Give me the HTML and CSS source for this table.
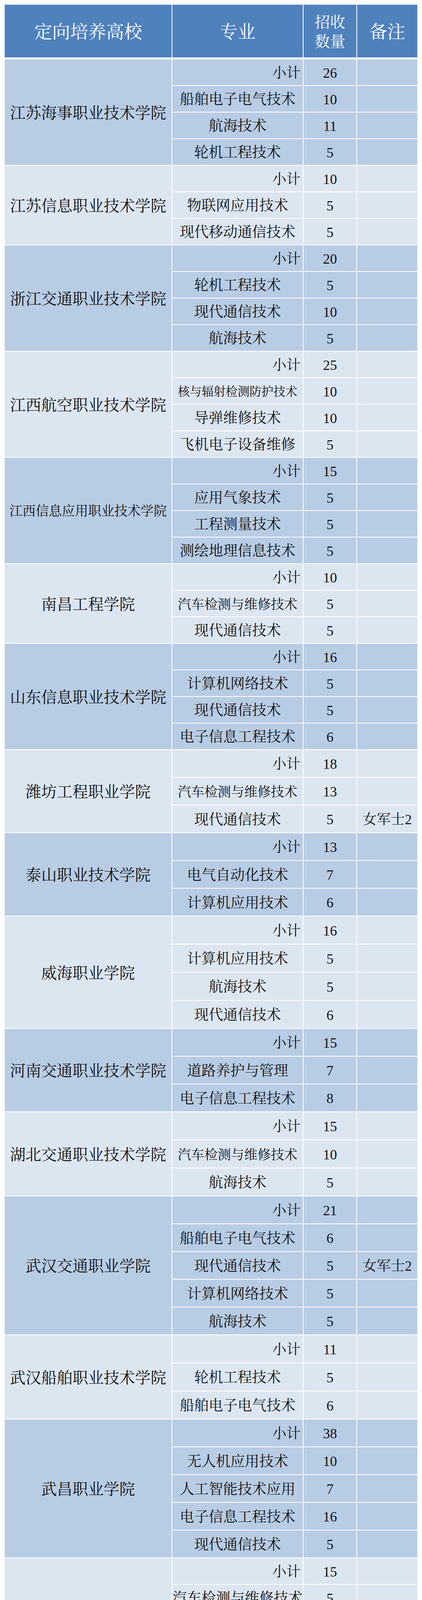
FILE: index.html
```html
<!DOCTYPE html>
<html lang="zh-CN">
<head>
<meta charset="utf-8">
<title>定向培养高校招收计划</title>
<link rel="stylesheet" href="styles.css">
</head>
<body>
<table class="plan">
  <colgroup>
    <col class="c-school"><col class="c-major"><col class="c-num"><col class="c-note">
  </colgroup>
  <thead>
    <tr><th>定向培养高校</th><th>专业</th><th class="h-num">招收<br>数量</th><th>备注</th></tr>
  </thead>

  <tbody class="dark r68">
    <tr><td class="school" rowspan="4">江苏海事职业技术学院</td><td class="sub">小计</td><td class="num">26</td><td></td></tr>
    <tr><td class="major">船舶电子电气技术</td><td class="num">10</td><td></td></tr>
    <tr><td class="major">航海技术</td><td class="num">11</td><td></td></tr>
    <tr><td class="major">轮机工程技术</td><td class="num">5</td><td></td></tr>
  </tbody>

  <tbody class="light r68">
    <tr><td class="school" rowspan="3">江苏信息职业技术学院</td><td class="sub">小计</td><td class="num">10</td><td></td></tr>
    <tr><td class="major">物联网应用技术</td><td class="num">5</td><td></td></tr>
    <tr><td class="major">现代移动通信技术</td><td class="num">5</td><td></td></tr>
  </tbody>

  <tbody class="dark r68">
    <tr><td class="school" rowspan="4">浙江交通职业技术学院</td><td class="sub">小计</td><td class="num">20</td><td></td></tr>
    <tr><td class="major">轮机工程技术</td><td class="num">5</td><td></td></tr>
    <tr><td class="major">现代通信技术</td><td class="num">10</td><td></td></tr>
    <tr><td class="major">航海技术</td><td class="num">5</td><td></td></tr>
  </tbody>

  <tbody class="light r68">
    <tr><td class="school" rowspan="4">江西航空职业技术学院</td><td class="sub">小计</td><td class="num">25</td><td></td></tr>
    <tr><td class="major m10">核与辐射检测防护技术</td><td class="num">10</td><td></td></tr>
    <tr><td class="major">导弹维修技术</td><td class="num">10</td><td></td></tr>
    <tr><td class="major">飞机电子设备维修</td><td class="num">5</td><td></td></tr>
  </tbody>

  <tbody class="dark r68">
    <tr><td class="school long" rowspan="4">江西信息应用职业技术学院</td><td class="sub">小计</td><td class="num">15</td><td></td></tr>
    <tr><td class="major">应用气象技术</td><td class="num">5</td><td></td></tr>
    <tr><td class="major">工程测量技术</td><td class="num">5</td><td></td></tr>
    <tr><td class="major">测绘地理信息技术</td><td class="num">5</td><td></td></tr>
  </tbody>

  <tbody class="light r68">
    <tr><td class="school" rowspan="3">南昌工程学院</td><td class="sub">小计</td><td class="num">10</td><td></td></tr>
    <tr><td class="major m9">汽车检测与维修技术</td><td class="num">5</td><td></td></tr>
    <tr><td class="major">现代通信技术</td><td class="num">5</td><td></td></tr>
  </tbody>

  <tbody class="dark r68">
    <tr><td class="school" rowspan="4">山东信息职业技术学院</td><td class="sub">小计</td><td class="num">16</td><td></td></tr>
    <tr><td class="major">计算机网络技术</td><td class="num">5</td><td></td></tr>
    <tr><td class="major">现代通信技术</td><td class="num">5</td><td></td></tr>
    <tr><td class="major">电子信息工程技术</td><td class="num">6</td><td></td></tr>
  </tbody>

  <tbody class="light r71">
    <tr><td class="school" rowspan="3">潍坊工程职业学院</td><td class="sub">小计</td><td class="num">18</td><td></td></tr>
    <tr><td class="major m9">汽车检测与维修技术</td><td class="num">13</td><td></td></tr>
    <tr><td class="major">现代通信技术</td><td class="num">5</td><td class="note">女军士2</td></tr>
  </tbody>

  <tbody class="dark r71">
    <tr><td class="school" rowspan="3">泰山职业技术学院</td><td class="sub">小计</td><td class="num">13</td><td></td></tr>
    <tr><td class="major">电气自动化技术</td><td class="num">7</td><td></td></tr>
    <tr><td class="major">计算机应用技术</td><td class="num">6</td><td></td></tr>
  </tbody>

  <tbody class="light r72">
    <tr><td class="school" rowspan="4">威海职业学院</td><td class="sub">小计</td><td class="num">16</td><td></td></tr>
    <tr><td class="major">计算机应用技术</td><td class="num">5</td><td></td></tr>
    <tr><td class="major">航海技术</td><td class="num">5</td><td></td></tr>
    <tr><td class="major">现代通信技术</td><td class="num">6</td><td></td></tr>
  </tbody>

  <tbody class="dark r71">
    <tr><td class="school" rowspan="3">河南交通职业技术学院</td><td class="sub">小计</td><td class="num">15</td><td></td></tr>
    <tr><td class="major">道路养护与管理</td><td class="num">7</td><td></td></tr>
    <tr><td class="major">电子信息工程技术</td><td class="num">8</td><td></td></tr>
  </tbody>

  <tbody class="light r72">
    <tr><td class="school" rowspan="3">湖北交通职业技术学院</td><td class="sub">小计</td><td class="num">15</td><td></td></tr>
    <tr><td class="major m9">汽车检测与维修技术</td><td class="num">10</td><td></td></tr>
    <tr><td class="major">航海技术</td><td class="num">5</td><td></td></tr>
  </tbody>

  <tbody class="dark r71">
    <tr><td class="school" rowspan="5">武汉交通职业学院</td><td class="sub">小计</td><td class="num">21</td><td></td></tr>
    <tr><td class="major">船舶电子电气技术</td><td class="num">6</td><td></td></tr>
    <tr><td class="major">现代通信技术</td><td class="num">5</td><td class="note">女军士2</td></tr>
    <tr><td class="major">计算机网络技术</td><td class="num">5</td><td></td></tr>
    <tr><td class="major">航海技术</td><td class="num">5</td><td></td></tr>
  </tbody>

  <tbody class="light r72">
    <tr><td class="school" rowspan="3">武汉船舶职业技术学院</td><td class="sub">小计</td><td class="num">11</td><td></td></tr>
    <tr><td class="major">轮机工程技术</td><td class="num">5</td><td></td></tr>
    <tr><td class="major">船舶电子电气技术</td><td class="num">6</td><td></td></tr>
  </tbody>

  <tbody class="dark r71">
    <tr><td class="school" rowspan="5">武昌职业学院</td><td class="sub">小计</td><td class="num">38</td><td></td></tr>
    <tr><td class="major">无人机应用技术</td><td class="num">10</td><td></td></tr>
    <tr><td class="major">人工智能技术应用</td><td class="num">7</td><td></td></tr>
    <tr><td class="major">电子信息工程技术</td><td class="num">16</td><td></td></tr>
    <tr><td class="major">现代通信技术</td><td class="num">5</td><td></td></tr>
  </tbody>

  <tbody class="light r68">
    <tr><td class="school" rowspan="4">湖南汽车工程职业学院</td><td class="sub">小计</td><td class="num">15</td><td></td></tr>
    <tr><td class="major">汽车检测与维修技术</td><td class="num">5</td><td></td></tr>
    <tr><td class="major">机械制造及自动化</td><td class="num">5</td><td></td></tr>
    <tr><td class="major">计算机网络技术</td><td class="num">5</td><td></td></tr>
  </tbody>

  <tbody class="dark r68">
    <tr><td class="school long" rowspan="4">湖南国防工业职业技术学院</td><td class="sub">小计</td><td class="num">15</td><td></td></tr>
    <tr><td class="major">机械设计与制造</td><td class="num">5</td><td></td></tr>
    <tr><td class="major m9">汽车制造与试验技术</td><td class="num">5</td><td></td></tr>
    <tr><td class="major">应用电子技术</td><td class="num">5</td><td></td></tr>
  </tbody>

  <tbody class="light r68">
    <tr><td class="school" rowspan="3">湖南体育职业学院</td><td class="sub">小计</td><td class="num">13</td><td></td></tr>
    <tr><td class="major m9">民族传统体育(散打)</td><td class="num">5</td><td></td></tr>
    <tr><td class="major">运动训练</td><td class="num">8</td><td></td></tr>
  </tbody>

  <tbody class="dark r68">
    <tr><td class="school" rowspan="5">长沙航空职业技术学院</td><td class="sub">小计</td><td class="num">35</td><td></td></tr>
    <tr><td class="major">飞行器维修技术</td><td class="num">10</td><td></td></tr>
    <tr><td class="major">通用航空器维修</td><td class="num">5</td><td></td></tr>
    <tr><td class="major">无人机应用技术</td><td class="num">5</td><td></td></tr>
    <tr><td class="major">导弹维修技术</td><td class="num">15</td><td></td></tr>
  </tbody>

  <tbody class="light r68">
    <tr><td class="school two" rowspan="4">张家界航空工业<br>职业技术学院</td><td class="sub">小计</td><td class="num">19</td><td></td></tr>
    <tr><td class="major">无人机应用技术</td><td class="num">5</td><td></td></tr>
    <tr><td class="major">电气自动化技术</td><td class="num">9</td><td></td></tr>
    <tr><td class="major">飞机电子设备维修</td><td class="num">5</td><td></td></tr>
  </tbody>

  <tbody class="dark r68">
    <tr><td class="school" rowspan="3">重庆医药高等专科学校</td><td class="sub">小计</td><td class="num">15</td><td></td></tr>
    <tr><td class="major">康复治疗技术</td><td class="num">5</td><td></td></tr>
    <tr><td class="major">临床医学</td><td class="num">10</td><td></td></tr>
  </tbody>

  <tbody class="light r68">
    <tr><td class="school" rowspan="3">重庆机电职业技术大学</td><td class="sub">小计</td><td class="num">13</td><td></td></tr>
    <tr><td class="major">机电一体化技术</td><td class="num">8</td><td></td></tr>
    <tr><td class="major">大数据技术</td><td class="num">5</td><td></td></tr>
  </tbody>

  <tbody class="dark r74">
    <tr><td class="school" rowspan="3">重庆航天职业技术学院</td><td class="sub">小计</td><td class="num">20</td><td></td></tr>
    <tr><td class="major">应用电子技术</td><td class="num">10</td><td></td></tr>
    <tr><td class="major">现代通信技术</td><td class="num">10</td><td></td></tr>
  </tbody>

  <tbody class="light r71">
    <tr><td class="school" rowspan="3">重庆交通职业学院</td><td class="sub">小计</td><td class="num">12</td><td></td></tr>
    <tr><td class="major">工程测量技术</td><td class="num">7</td><td></td></tr>
    <tr><td class="major m9">汽车制造与试验技术</td><td class="num">5</td><td></td></tr>
  </tbody>

  <tbody class="dark r71">
    <tr><td class="school" rowspan="3">四川邮电职业技术学院</td><td class="sub">小计</td><td class="num">11</td><td></td></tr>
    <tr><td class="major">现代移动通信技术</td><td class="num">5</td><td></td></tr>
    <tr><td class="major">现代通信技术</td><td class="num">6</td><td></td></tr>
  </tbody>

  <tbody class="light r72">
    <tr><td class="school" rowspan="4">成都航空职业技术学院</td><td class="sub">小计</td><td class="num">25</td><td></td></tr>
    <tr><td class="major">飞机电子设备维修</td><td class="num">10</td><td></td></tr>
    <tr><td class="major">飞机机电设备维修</td><td class="num">5</td><td></td></tr>
    <tr><td class="major">无人机应用技术</td><td class="num">10</td><td></td></tr>
  </tbody>

  <tbody class="dark r71">
    <tr><td class="school" rowspan="3">延安职业技术学院</td><td class="sub">小计</td><td class="num">14</td><td></td></tr>
    <tr><td class="major">轮机工程技术</td><td class="num">5</td><td></td></tr>
    <tr><td class="major m9">汽车制造与试验技术</td><td class="num">9</td><td></td></tr>
  </tbody>

  <tbody class="light r71">
    <tr><td class="school long" rowspan="3">兰州资源环境职业技术大学</td><td class="sub">小计</td><td class="num">21</td><td></td></tr>
    <tr><td class="major">应用气象技术</td><td class="num">16</td><td></td></tr>
    <tr><td class="major m10">电力系统继电保护技术</td><td class="num">5</td><td></td></tr>
  </tbody>
</table>
</body>
</html>
```

FILE: styles.css
```css
html, body {
  margin: 0;
  padding: 0;
  background: #ffffff;
}

body {
  font-family: "Liberation Serif", "Noto Serif CJK SC", "Noto Sans CJK SC", serif;
  color: #111111;
}

.plan {
  border-collapse: separate;
  border-spacing: 2px;
  table-layout: fixed;
  width: 1060px;
  margin: 10px 0 0 10px;
}

.c-school { width: 427px; }
.c-major  { width: 334px; }
.c-num    { width: 135px; }
.c-note   { width: 154px; }

th, td {
  padding: 0;
  text-align: center;
  vertical-align: middle;
  white-space: nowrap;
}

/* header */
thead tr { height: 138px; }

thead th {
  background: #4f81bd;
  color: #ffffff;
  font-weight: normal;
  font-size: 46px;
  line-height: 50px;
  padding-top: 5px;
  border-bottom: 3px solid #ffffff;
}

thead th.h-num {
  font-size: 39px;
}

/* body groups */
.dark td  { background: #b8cce4; }
.light td { background: #dce6f1; }

.r68 tr { height: 66px; }
.r71 tr { height: 69px; }
.r72 tr { height: 70px; }
.r74 tr { height: 72px; }

tbody td {
  padding-top: 5px;
  line-height: 1.1;
}

.school {
  font-size: 40px;
}

.school.long {
  font-size: 33.6px;
}

.school.two {
  line-height: 44px;
}

.major {
  font-size: 37px;
}

.major.m9 {
  font-size: 34px;
}

.major.m10 {
  font-size: 30.6px;
}

.sub {
  font-size: 36px;
  text-align: right;
  padding-right: 6px;
}

.num {
  font-size: 36px;
}

.note {
  font-size: 36px;
}
```
